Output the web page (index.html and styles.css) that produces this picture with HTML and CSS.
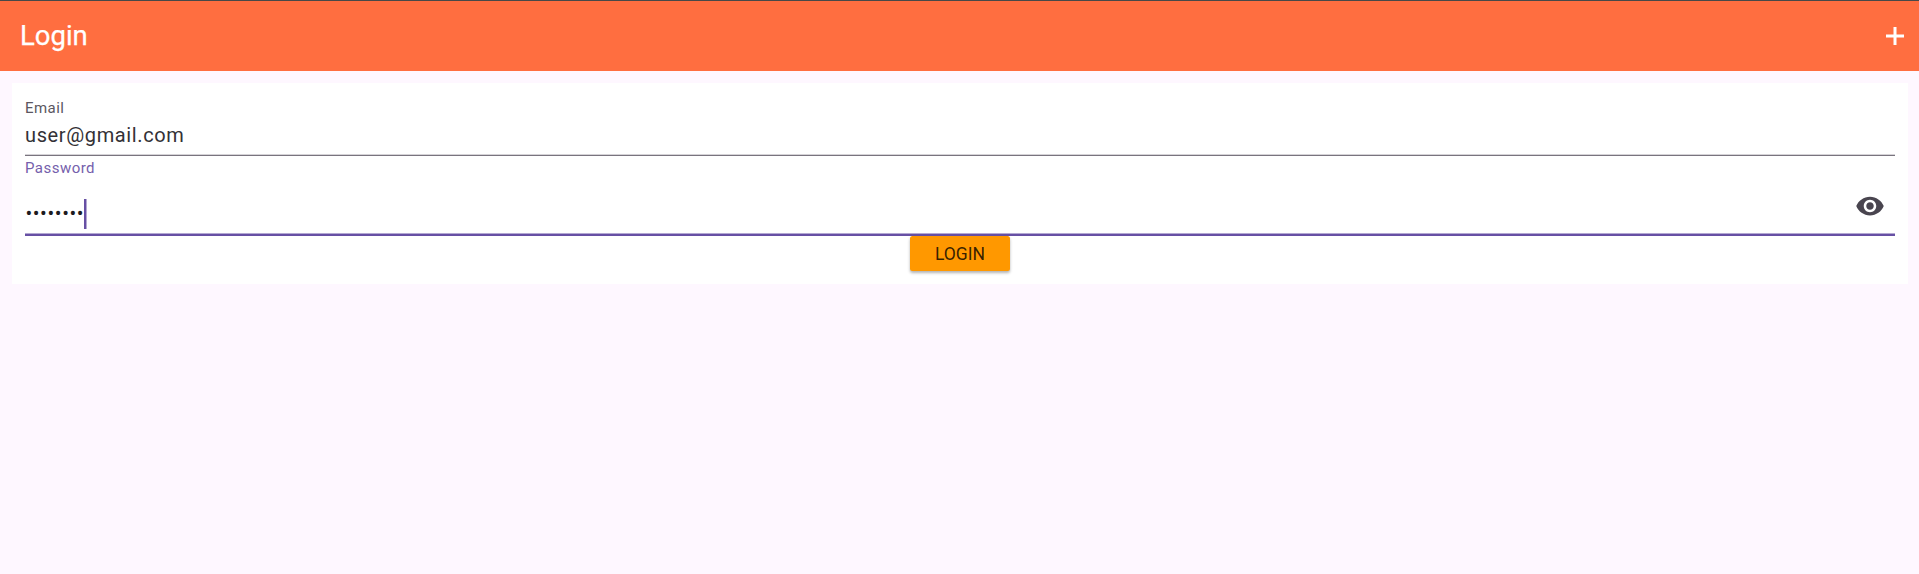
FILE: index.html
```html
<!DOCTYPE html>
<html lang="en">
<head>
<meta charset="utf-8">
<title>Login</title>
<link rel="stylesheet" href="styles.css">
</head>
<body>
<header class="app-bar">
  <h1 class="title">Login</h1>
  <svg class="add-icon" viewBox="0 0 30 30"><path d="M6 15h18M15 6v18"/></svg>
</header>
<main class="card">
  <div class="field email">
    <span class="label">Email</span>
    <span class="value">user@gmail.com</span>
  </div>
  <div class="field password">
    <span class="label">Password</span>
    <div class="entry">
      <span class="dots">••••••••</span><span class="caret"></span>
      <svg class="eye-icon" viewBox="0 0 24 24"><path d="M12 4.5C7 4.5 2.73 7.61 1 12c1.73 4.39 6 7.5 11 7.5s9.27-3.11 11-7.5c-1.73-4.39-6-7.5-11-7.5zM12 17c-2.76 0-5-2.24-5-5s2.24-5 5-5 5 2.24 5 5-2.24 5-5 5zm0-8c-1.66 0-3 1.34-3 3s1.34 3 3 3 3-1.34 3-3-1.34-3-3-3z"/></svg>
    </div>
  </div>
  <button class="login">LOGIN</button>
</main>
</body>
</html>
```
FILE: styles.css
```css
* { box-sizing: border-box; }
body {
  margin: 0;
  min-height: 574px;
  background: #fef7ff;
  font-family: Roboto, sans-serif;
}
.app-bar {
  display: flex;
  align-items: center;
  justify-content: space-between;
  height: 71px;
  padding: 0 9px 0 20px;
  border-top: 1px solid #484848;
  background: #ff6e40;
  color: #fff;
}
.title {
  margin: 0;
  padding-bottom: 2px;
  font-size: 27.5px;
  font-weight: 400;
  line-height: 35px;
  -webkit-text-stroke: .25px #fff;
}
.add-icon {
  width: 30px;
  height: 30px;
  fill: none;
  stroke: #fff;
  stroke-width: 3;
}
.card {
  display: flex;
  flex-direction: column;
  height: 201px;
  margin: 12px 11px 0 12px;
  padding: 13px 13px 0;
  background: #fff;
}
.field { display: flex; flex-direction: column; }
.email {
  height: 60px;
  padding-top: 2px;
  background: linear-gradient(#d5d3d7 50%, #79747e 50%) bottom / 100% 2px no-repeat;
}
.label {
  font-size: 15px;
  line-height: 20px;
  letter-spacing: .47px;
  color: #5b5761;
}
.value {
  margin-top: 2px;
  font-size: 20px;
  line-height: 30px;
  letter-spacing: .625px;
  color: #333136;
}
.password {
  height: 80px;
  padding-top: 2px;
  background: linear-gradient(#b3a8d2 1px, #6750a4 1px) bottom / 100% 3px no-repeat;
}
.password .label { color: #7560ac; }
.entry { display: flex; }
.dots {
  height: 30px;
  margin-top: 20px;
  padding-left: .4px;
  font-size: 20px;
  line-height: 30px;
  letter-spacing: .6px;
  color: #1d1b20;
}
.caret {
  width: 3px;
  height: 30px;
  margin-top: 21px;
  background: linear-gradient(90deg, #6750a4 2px, #b3a8d2 2px);
}
.eye-icon {
  width: 30px;
  height: 30px;
  margin: 13px 10px 0 auto;
  fill: #49454f;
}
.login {
  align-self: center;
  width: 100px;
  height: 35px;
  padding: 1px 0 0;
  border: 0;
  border-radius: 2.5px;
  background: #ff9800;
  box-shadow: 0 2px 3px rgba(0, 0, 0, .3);
  font: 400 17.5px/35px Roboto, sans-serif;
  color: rgba(0, 0, 0, .8);
}
```
